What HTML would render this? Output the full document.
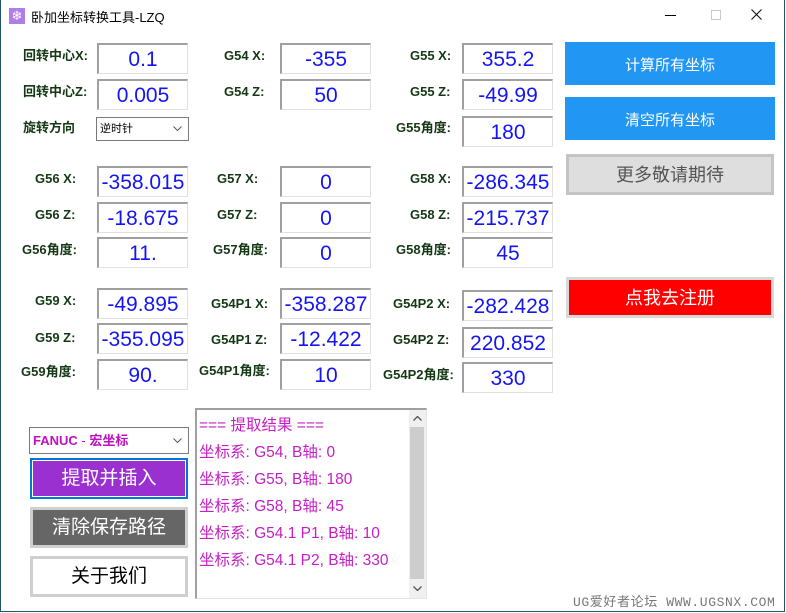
<!DOCTYPE html>
<html><head><meta charset="utf-8"><style>
*{margin:0;padding:0;box-sizing:border-box}
body{width:786px;height:613px;background:#fff;position:relative;overflow:hidden;font-family:"Liberation Sans","Noto Sans CJK SC",sans-serif}
.a{position:absolute}
.win{position:absolute;left:0;top:0;width:785px;height:612px;border-left:1px solid #24556b;border-right:1px solid #24556b;border-bottom:1px solid #24556b}
.lb{position:absolute;font-weight:bold;font-size:13px;color:#143814;white-space:nowrap;line-height:16px}
.bx{position:absolute;width:91px;height:31px;border-top:2px solid #a0a0a0;border-left:2px solid #a0a0a0;border-right:1px solid #e0e0e0;border-bottom:1px solid #e0e0e0;color:#1414f5;font-size:21px;text-align:center;line-height:29px;white-space:nowrap;overflow:hidden}
.btn{position:absolute;text-align:center;color:#fff;font-size:16px}
.tx{font-size:15.5px;color:#c41ec4;line-height:27px;white-space:nowrap}
.chev{position:absolute;right:6px;top:50%;margin-top:-3px}
</style></head><body>
<div class="win"></div>
<div class="a" style="left:9px;top:8px;width:16px;height:16px;background:#b07ee6;color:#fff;font-size:13px;line-height:16px;text-align:center">❄</div>
<div class="a" style="left:31px;top:7px;font-size:13px;color:#000">卧加坐标转换工具-LZQ</div>
<div class="a" style="left:665px;top:15px;width:11px;height:1px;background:#000"></div>
<div class="a" style="left:711px;top:10px;width:10px;height:10px;border:1px solid #c8c8c8"></div>
<svg class="a" style="left:751px;top:9px" width="11" height="11"><path d="M0.5 0.5L10.5 10.5M10.5 0.5L0.5 10.5" stroke="#111" stroke-width="1.1"/></svg>

<div class="lb" style="left:23px;top:48px">回转中心X:</div>
<div class="lb" style="left:23px;top:84px">回转中心Z:</div>
<div class="lb" style="left:23px;top:120px">旋转方向</div>
<div class="bx" style="left:97px;top:43px">0.1</div>
<div class="bx" style="left:97px;top:79px">0.005</div>
<div class="a" style="left:96px;top:117px;width:93px;height:24px;border:1px solid #7a7a7a;font-size:11px;line-height:22px;padding-left:3px">逆时针<svg class="chev" width="9" height="5"><path d="M0.5 0.5L4.5 4.5L8.5 0.5" stroke="#555" fill="none"/></svg></div>

<div class="lb" style="left:224px;top:48px">G54 X:</div>
<div class="lb" style="left:224px;top:84px">G54 Z:</div>
<div class="bx" style="left:280px;top:43px">-355</div>
<div class="bx" style="left:280px;top:79px">50</div>

<div class="lb" style="left:410px;top:48px">G55 X:</div>
<div class="lb" style="left:410px;top:84px">G55 Z:</div>
<div class="lb" style="left:396px;top:120px">G55角度:</div>
<div class="bx" style="left:462px;top:43px">355.2</div>
<div class="bx" style="left:462px;top:79px">-49.99</div>
<div class="bx" style="left:462px;top:116px">180</div>

<div class="lb" style="left:35px;top:171px">G56 X:</div>
<div class="lb" style="left:35px;top:207px">G56 Z:</div>
<div class="lb" style="left:22px;top:242px">G56角度:</div>
<div class="bx" style="left:97px;top:166px">-358.015</div>
<div class="bx" style="left:97px;top:202px">-18.675</div>
<div class="bx" style="left:97px;top:237px">11.</div>

<div class="lb" style="left:217px;top:171px">G57 X:</div>
<div class="lb" style="left:217px;top:207px">G57 Z:</div>
<div class="lb" style="left:213px;top:242px">G57角度:</div>
<div class="bx" style="left:280px;top:166px">0</div>
<div class="bx" style="left:280px;top:202px">0</div>
<div class="bx" style="left:280px;top:237px">0</div>

<div class="lb" style="left:410px;top:171px">G58 X:</div>
<div class="lb" style="left:410px;top:207px">G58 Z:</div>
<div class="lb" style="left:396px;top:242px">G58角度:</div>
<div class="bx" style="left:462px;top:166px">-286.345</div>
<div class="bx" style="left:462px;top:202px">-215.737</div>
<div class="bx" style="left:462px;top:237px">45</div>

<div class="lb" style="left:35px;top:293px">G59 X:</div>
<div class="lb" style="left:35px;top:330px">G59 Z:</div>
<div class="lb" style="left:21px;top:364px">G59角度:</div>
<div class="bx" style="left:97px;top:288px">-49.895</div>
<div class="bx" style="left:97px;top:323px">-355.095</div>
<div class="bx" style="left:97px;top:359px">90.</div>

<div class="lb" style="left:211px;top:296px">G54P1 X:</div>
<div class="lb" style="left:211px;top:332px">G54P1 Z:</div>
<div class="lb" style="left:199px;top:363px">G54P1角度:</div>
<div class="bx" style="left:280px;top:288px">-358.287</div>
<div class="bx" style="left:280px;top:323px">-12.422</div>
<div class="bx" style="left:280px;top:359px">10</div>

<div class="lb" style="left:393px;top:296px">G54P2 X:</div>
<div class="lb" style="left:393px;top:332px">G54P2 Z:</div>
<div class="lb" style="left:383px;top:367px">G54P2角度:</div>
<div class="bx" style="left:462px;top:290px">-282.428</div>
<div class="bx" style="left:462px;top:327px">220.852</div>
<div class="bx" style="left:462px;top:362px">330</div>

<div class="btn" style="left:565px;top:42px;width:210px;height:43px;background:#2196f3;line-height:47px;font-size:15px">计算所有坐标</div>
<div class="btn" style="left:565px;top:97px;width:210px;height:43px;background:#2196f3;line-height:47px;font-size:15px">清空所有坐标</div>
<div class="btn" style="left:566px;top:154px;width:208px;height:41px;background:#dedede;border:3px solid #c4c4c4;color:#555;line-height:37px;font-size:18px">更多敬请期待</div>
<div class="btn" style="left:566px;top:277px;width:208px;height:41px;background:#f00;border:3px solid #d8d8d8;line-height:37px;font-size:18px">点我去注册</div>

<div class="a" style="left:29px;top:427px;width:160px;height:27px;border:1px solid #7a7a7a;font-size:13px;line-height:25px;padding-left:3px;color:#c010c0;font-weight:bold">FANUC <span style="font-weight:normal">-</span> 宏坐标<svg class="chev" width="9" height="5"><path d="M0.5 0.5L4.5 4.5L8.5 0.5" stroke="#555" fill="none"/></svg></div>
<div class="btn" style="left:30px;top:458px;width:158px;height:41px;background:#9b30d0;border:2px solid #0078d7;box-shadow:inset 0 0 0 1px #fff;line-height:38px;font-size:19px">提取并插入</div>
<div class="btn" style="left:30px;top:507px;width:158px;height:41px;background:#666;border:3px solid #cfcfcf;line-height:36px;font-size:19px">清除保存路径</div>
<div class="btn" style="left:30px;top:556px;width:158px;height:41px;background:#fff;border:3px solid #cfcfcf;color:#000;line-height:36px;font-size:19px">关于我们</div>

<div class="a" style="left:195px;top:408px;width:232px;height:191px;border-top:2px solid #a0a0a0;border-left:2px solid #a0a0a0;border-right:1px solid #e3e3e3;border-bottom:1px solid #e3e3e3">
<div style="position:absolute;left:2px;top:2px" class="tx">=== 提取结果 ===<br>坐标系: G54, B轴: 0<br>坐标系: G55, B轴: 180<br>坐标系: G58, B轴: 45<br>坐标系: G54.1 P1, B轴: 10<br>坐标系: G54.1 P2, B轴: 330</div>
<div style="position:absolute;left:212px;top:0;width:17px;height:188px;background:#f0f0f0">
<div style="position:absolute;left:1px;top:17px;width:14px;height:152px;background:#cdcdcd"></div>
<svg style="position:absolute;left:4px;top:6px" width="9" height="5"><path d="M0.5 4.5L4.5 0.5L8.5 4.5" stroke="#555" fill="none" stroke-width="1.3"/></svg>
<svg style="position:absolute;left:4px;top:176px" width="9" height="5"><path d="M0.5 0.5L4.5 4.5L8.5 0.5" stroke="#555" fill="none" stroke-width="1.3"/></svg>
</div>
</div>

<div class="a" style="left:573px;top:591px;font-family:'Liberation Mono','Noto Sans CJK SC',monospace;font-size:13px;color:#777;letter-spacing:0.6px;white-space:nowrap">UG爱好者论坛 WWW.UGSNX.COM</div>
</body></html>
